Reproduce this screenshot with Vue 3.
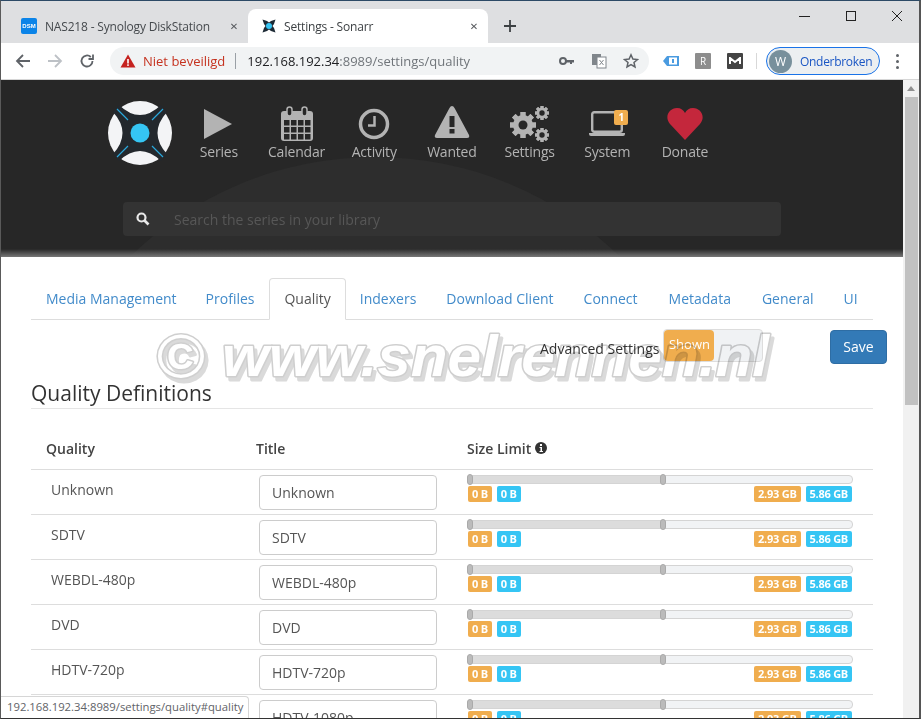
<script setup>
const navItems = [
  { label: 'Series', icon: 'play' },
  { label: 'Calendar', icon: 'calendar' },
  { label: 'Activity', icon: 'clock' },
  { label: 'Wanted', icon: 'warning' },
  { label: 'Settings', icon: 'cogs' },
  { label: 'System', icon: 'laptop' },
  { label: 'Donate', icon: 'heart' }
]

const tabs = ['Media Management', 'Profiles', 'Quality', 'Indexers', 'Download Client', 'Connect', 'Metadata', 'General', 'UI']

const qualities = ['Unknown', 'SDTV', 'WEBDL-480p', 'DVD', 'HDTV-720p', 'HDTV-1080p']

// gear teeth, so the three cogs don't need three long paths
const teeth = [0, 45, 90, 135, 180, 225, 270, 315]
const calendarCols = [8, 15, 22, 29]
const calendarRows = [14, 21, 28]
</script>

<template>
  <div class="window">
    <!-- browser chrome -->
    <div class="tabstrip">
      <div class="tab">
        <span class="dsm-icon">DSM</span>
        <span class="tab-title">NAS218 - Synology DiskStation</span>
        <span class="tab-close">✕</span>
      </div>
      <div class="tab active">
        <svg class="fav" viewBox="0 0 16 16" width="16" height="16">
          <path d="M1.500 1.500 L6 3 L8 4.500 L10 3 L14.500 1.500 L13 6 L11.500 8 L13 10 L14.500 14.500 L10 13 L8 11.500 L6 13 L1.500 14.500 L3 10 L4.500 8 L3 6 Z" fill="#1d2a35" />
          <circle cx="8" cy="8" r="3" fill="#35c5f4" />
        </svg>
        <span class="tab-title">Settings - Sonarr</span>
        <span class="tab-close">✕</span>
      </div>
      <svg class="newtab" viewBox="0 0 14 14" width="14" height="14">
        <path d="M7 1 V13 M1 7 H13" stroke="#3c4043" stroke-width="1.800" fill="none" />
      </svg>
      <div class="winbtns">
        <svg viewBox="0 0 12 12" width="12" height="12"><path d="M0 6.500 H11" stroke="#222" stroke-width="1" /></svg>
        <svg viewBox="0 0 12 12" width="12" height="12"><rect x="1.500" y="1.500" width="9" height="9" stroke="#222" fill="none" /></svg>
        <svg viewBox="0 0 12 12" width="12" height="12"><path d="M1 1 L11 11 M11 1 L1 11" stroke="#222" fill="none" /></svg>
      </div>
    </div>

    <div class="toolbar">
      <svg class="tool" viewBox="0 0 16 16" width="16" height="16"><path d="M15 8 H2 M8 2 L2 8 L8 14" stroke="#5f6368" stroke-width="1.800" fill="none" /></svg>
      <svg class="tool" viewBox="0 0 16 16" width="16" height="16"><path d="M1 8 H14 M8 2 L14 8 L8 14" stroke="#bdc1c6" stroke-width="1.800" fill="none" /></svg>
      <svg class="tool" viewBox="0 0 16 16" width="16" height="16"><path d="M13.500 8 A5.500 5.500 0 1 1 11.800 4 M14 1.500 V6 H9.500" stroke="#5f6368" stroke-width="1.800" fill="none" /></svg>
      <div class="omnibox">
        <svg viewBox="0 0 16 14" width="16" height="14"><path d="M8 0.500 L15.500 13.500 H0.500 Z" fill="#c5221f" /><rect x="7.200" y="5" width="1.600" height="4.500" fill="#fff" /><rect x="7.200" y="10.300" width="1.600" height="1.600" fill="#fff" /></svg>
        <span class="insecure">Niet beveiligd</span>
        <span class="omni-sep"></span>
        <span class="url">192.168.192.34<span class="url-rest">:8989/settings/quality</span></span>
        <span class="omni-icons">
          <svg viewBox="0 0 16 10" width="16" height="10"><circle cx="4" cy="5" r="3" stroke="#5f6368" stroke-width="2" fill="none" /><path d="M7 4 H15 V6.500 H13 V8 H11 V6.500 H7 Z" fill="#5f6368" /></svg>
          <svg viewBox="0 0 16 16" width="16" height="16"><rect x="1" y="1" width="9" height="11" fill="#80868b" /><rect x="6" y="4" width="9" height="11" fill="#fff" stroke="#80868b" /><path d="M8.500 7 L12.500 12 M12.500 7 L8.500 12" stroke="#80868b" /></svg>
          <svg viewBox="0 0 16 16" width="16" height="16"><path d="M8 1.800 L9.900 6 L14.500 6.500 L11 9.500 L12 14 L8 11.700 L4 14 L5 9.500 L1.500 6.500 L6.100 6 Z" stroke="#5f6368" stroke-width="1.500" fill="none" /></svg>
        </span>
      </div>
      <div class="exts">
        <svg viewBox="0 0 16 12" width="16" height="12"><path d="M0 6 L4 1 H16 V11 H4 Z" fill="#4a9be0" /><rect x="6" y="2.500" width="8" height="7" fill="#fff" /><rect x="9" y="4" width="2" height="4" fill="#4a9be0" /></svg>
        <span class="ext-r">R</span>
        <span class="ext-m">
          <svg viewBox="0 0 12 8" width="12" height="8"><path d="M1 7 V1 L6 5 L11 1 V7" stroke="#fff" stroke-width="2" fill="none" /></svg>
        </span>
      </div>
      <span class="ext-sep"></span>
      <div class="profile">
        <span class="avatar">W</span>
        <span>Onderbroken</span>
      </div>
      <span class="kebab"><i></i><i></i><i></i></span>
    </div>

    <div class="viewport">
      <div class="page">
        <!-- Sonarr header -->
        <header class="site-header">
          <div class="backdrop-circle"></div>
          <div class="nav-row">
            <svg class="logo" viewBox="0 0 64 64" width="64" height="64">
              <circle cx="32" cy="32" r="32" fill="#f3f4f6" />
              <path d="M5 11 L11 4 Q32 24 53 4 L59 11 Q40 32 59 53 L53 60 Q32 40 11 60 L5 53 Q24 32 5 11 Z" fill="#23282d" />
              <path d="M9 8 L20 19 M55 8 L44 19 M9 56 L20 45 M55 56 L44 45" stroke="#2aa8dc" stroke-width="1.200" />
              <circle cx="32" cy="32" r="9.500" fill="#35c5f4" />
            </svg>
            <div v-for="item in navItems" :key="item.label" class="nav-item">
              <div class="nav-icon">
                <svg v-if="item.icon === 'play'" viewBox="0 0 32 32" width="32" height="32">
                  <path d="M1 1 L29 16 L1 31 Z" fill="#b3b3b3" />
                </svg>
                <svg v-else-if="item.icon === 'calendar'" viewBox="0 0 34 36" width="34" height="36">
                  <rect x="1" y="5" width="32" height="30" rx="3" fill="#b3b3b3" />
                  <rect x="7" y="1" width="5" height="9" rx="2.500" fill="#272727" stroke="#b3b3b3" stroke-width="1.500" />
                  <rect x="22" y="1" width="5" height="9" rx="2.500" fill="#272727" stroke="#b3b3b3" stroke-width="1.500" />
                  <template v-for="col in calendarCols" :key="col">
                    <rect v-for="row in calendarRows" :key="row" :x="col - 4" :y="row" width="5.500" height="5.500" fill="#272727" />
                  </template>
                </svg>
                <svg v-else-if="item.icon === 'clock'" viewBox="0 0 32 32" width="32" height="32">
                  <circle cx="16" cy="16" r="13.500" stroke="#b3b3b3" stroke-width="3.500" fill="none" />
                  <path d="M16.500 8 V17.500 H10" stroke="#b3b3b3" stroke-width="2.500" fill="none" />
                </svg>
                <svg v-else-if="item.icon === 'warning'" class="warn-icon" viewBox="0 0 36 34" width="36" height="34">
                  <path d="M18 1 Q19.500 1 20.500 3 L35 30 Q36 33 33 33 H3 Q0 33 1 30 L15.500 3 Q16.500 1 18 1 Z" fill="#b3b3b3" />
                  <rect x="15.500" y="11" width="5" height="11" fill="#272727" />
                  <rect x="15.500" y="24" width="5" height="4.500" fill="#272727" />
                </svg>
                <svg v-else-if="item.icon === 'cogs'" viewBox="0 0 40 36" width="40" height="36">
                  <g transform="translate(13 19)">
                    <rect v-for="t in teeth" :key="t" x="-2.500" y="-13" width="5" height="26" fill="#b3b3b3" :transform="`rotate(${t})`" />
                    <circle r="10" fill="#b3b3b3" />
                    <circle r="4.500" fill="#272727" />
                  </g>
                  <g transform="translate(32 7)">
                    <rect v-for="t in teeth" :key="t" x="-1.500" y="-7" width="3" height="14" fill="#b3b3b3" :transform="`rotate(${t})`" />
                    <circle r="5.500" fill="#b3b3b3" />
                    <circle r="2.700" fill="#272727" />
                  </g>
                  <g transform="translate(32 29)">
                    <rect v-for="t in teeth" :key="t" x="-1.500" y="-7" width="3" height="14" fill="#b3b3b3" :transform="`rotate(${t})`" />
                    <circle r="5.500" fill="#b3b3b3" />
                    <circle r="2.700" fill="#272727" />
                  </g>
                </svg>
                <span v-else-if="item.icon === 'laptop'" class="laptop">
                  <svg viewBox="0 0 38 26" width="38" height="26">
                    <rect x="4.200" y="1.200" width="29.600" height="19.600" rx="2" stroke="#b3b3b3" stroke-width="2.400" fill="none" />
                    <path d="M1 22 H37 V23 Q37 25 35 25 H3 Q1 25 1 23 Z" fill="#b3b3b3" />
                  </svg>
                  <span class="laptop-badge">1</span>
                </span>
                <svg v-else viewBox="0 0 36 32" width="36" height="32">
                  <path d="M18 32 L3 16 C-3 9 2 0 10 0 C14 0 16.500 2 18 5 C19.500 2 22 0 26 0 C34 0 39 9 33 16 Z" fill="#c4273c" />
                </svg>
              </div>
              <span class="nav-label">{{ item.label }}</span>
            </div>
          </div>

          <div class="search">
            <svg viewBox="0 0 14 14" width="14" height="14">
              <circle cx="5.500" cy="5.500" r="4" stroke="#e8e8e8" stroke-width="2.200" fill="none" />
              <path d="M8.500 8.500 L12.500 12.500" stroke="#e8e8e8" stroke-width="2.600" />
            </svg>
            <span class="search-text">Search the series in your library</span>
          </div>
          <div class="header-fade"></div>
        </header>

        <!-- settings panel -->
        <main class="panel">
          <nav class="tabs">
            <a v-for="tab in tabs" :key="tab" :class="['tab-link', { current: tab === 'Quality' }]">{{ tab }}</a>
          </nav>

          <div class="actions">
            <span class="adv-label">Advanced Settings</span>
            <div class="switch">
              <span class="switch-on">Shown</span>
            </div>
            <button class="save">Save</button>
          </div>

          <h3 class="legend">Quality Definitions</h3>

          <div class="thead">
            <span class="col-quality">Quality</span>
            <span class="col-title">Title</span>
            <span class="col-size">Size Limit
              <svg class="info" viewBox="0 0 12 12" width="12" height="12">
                <circle cx="6" cy="6" r="6" fill="#333" />
                <rect x="5" y="2" width="2" height="2" fill="#fff" />
                <path d="M4.500 5 H7 V9 H8 V10 H4.500 V9 H5.500 V6 H4.500 Z" fill="#fff" />
              </svg>
            </span>
          </div>

          <div v-for="q in qualities" :key="q" class="row">
            <div class="cell-quality">{{ q }}</div>
            <div class="cell-title">
              <div class="input">{{ q }}</div>
            </div>
            <div class="cell-size">
              <div class="slider">
                <span class="slider-fill"></span>
                <span class="handle"></span>
                <span class="handle mid"></span>
              </div>
              <div class="limits">
                <span class="pill orange">0 B</span>
                <span class="pill blue">0 B</span>
                <span class="spacer"></span>
                <span class="pill orange">2.93 GB</span>
                <span class="pill blue">5.86 GB</span>
              </div>
            </div>
          </div>
        </main>
      </div>

      <div class="scrollbar">
        <svg viewBox="0 0 8 5" width="8" height="5"><path d="M4 0 L8 5 H0 Z" fill="#909090" /></svg>
        <div class="thumb"></div>
      </div>

      <!-- these two really do lie over the page -->
      <svg class="watermark" viewBox="0 0 640 70" width="640" height="70">
        <text class="wm-text" x="4" y="56" font-size="62" textLength="48" lengthAdjust="spacingAndGlyphs">©</text>
        <text class="wm-text" x="70" y="54" font-size="58" textLength="547" lengthAdjust="spacingAndGlyphs">www.snelrennen.nl</text>
      </svg>
      <div class="status">192.168.192.34:8989/settings/quality#quality</div>
    </div>
  </div>
</template>

<style>
html, body {
  margin: 0;
  height: 719px;
  overflow: hidden;
  background: #fff;
}
</style>

<style scoped>
.window {
  width: 921px;
  height: 719px;
  box-sizing: border-box;
  display: flex;
  flex-direction: column;
  border-top: 1px solid #2c4a66;
  border-left: 1px solid #5a5a5a;
  border-right: 2px solid #555;
  border-bottom: 1px solid #333;
  font-family: "Open Sans", "Noto Sans", sans-serif;
  color: #333;
  overflow: hidden;
}

.tabstrip {
  height: 42px;
  flex: none;
  background: #dedfe1;
  display: flex;
  align-items: flex-end;
  position: relative;
  padding-left: 7px;
}

.tab {
  width: 240px;
  height: 34px;
  box-sizing: border-box;
  display: flex;
  align-items: center;
  padding: 0 10px 0 13px;
  font-size: 12px;
  letter-spacing: -0.18px;
  color: #45494d;
}

.tab.active {
  background: #fff;
  border-radius: 8px 8px 0 0;
  color: #3c4043;
}

.tab-title {
  flex: 1;
  margin-left: 8px;
  white-space: nowrap;
}

.tab.active .tab-title {
  margin-left: 7px;
}

.tab-close {
  font-size: 10px;
  font-family: "DejaVu Sans", sans-serif;
  color: #55585c;
}

.dsm-icon {
  width: 16px;
  height: 16px;
  background: #0b84e8;
  border-radius: 2px;
  color: #fff;
  font: bold 6px/16px "Liberation Sans", sans-serif;
  letter-spacing: 0;
  text-align: center;
}

.newtab {
  margin: 0 0 10px 15px;
}

.winbtns {
  position: absolute;
  top: 9px;
  right: 16px;
  display: flex;
  gap: 34px;
}

.toolbar {
  height: 37px;
  flex: none;
  box-sizing: border-box;
  background: #fff;
  border-bottom: 1px solid #d6d6d6;
  display: flex;
  align-items: center;
  padding-left: 14px;
}

.tool {
  margin-right: 16px;
}

.omnibox {
  width: 539px;
  height: 28px;
  box-sizing: border-box;
  margin-left: -1px;
  background: #f1f3f4;
  border-radius: 14px;
  display: flex;
  align-items: center;
  padding: 0 10px;
  font-size: 13px;
  white-space: nowrap;
}

.insecure {
  color: #c5321f;
  margin-left: 7px;
}

.omni-sep {
  width: 1px;
  height: 16px;
  background: #9aa0a6;
  margin: 0 11px 0 10px;
}

.url {
  color: #202124;
}

.url-rest {
  color: #70757a;
}

.omni-icons {
  margin-left: auto;
  display: flex;
  align-items: center;
  gap: 16px;
}

.exts {
  display: flex;
  align-items: center;
  gap: 16px;
  margin-left: 14px;
}

.ext-r, .ext-m {
  width: 16px;
  height: 16px;
  display: flex;
  align-items: center;
  justify-content: center;
  border-radius: 1px;
  color: #fff;
  font-size: 10px;
}

.ext-r {
  background: #8d8d8d;
}

.ext-m {
  background: #444;
}

.ext-sep {
  width: 1px;
  height: 16px;
  background: #d8d8d8;
  margin: 0 9px 0 13px;
}

.profile {
  width: 114px;
  height: 28px;
  box-sizing: border-box;
  border: 1px solid #1a73e8;
  border-radius: 14px;
  background: #eceff1;
  display: flex;
  align-items: center;
  gap: 8px;
  padding-left: 2px;
  color: #1a56c4;
  font-size: 12px;
  letter-spacing: -0.3px;
}

.avatar {
  width: 23px;
  height: 23px;
  border-radius: 50%;
  background: #78909c;
  color: #fff;
  text-align: center;
  line-height: 23px;
}

.kebab {
  display: flex;
  flex-direction: column;
  gap: 3px;
  margin-left: 16px;
}

.kebab i {
  width: 3px;
  height: 3px;
  border-radius: 50%;
  background: #5f6368;
}

.viewport {
  flex: 1;
  min-height: 0;
  display: flex;
  position: relative;
}

.page {
  flex: 1;
  min-width: 0;
  overflow: hidden;
}

.site-header {
  height: 177px;
  box-sizing: border-box;
  background: #272727;
  position: relative;
  overflow: hidden;
  padding-top: 21px;
}

.backdrop-circle {
  position: absolute;
  left: 23px;
  top: 77px;
  width: 702px;
  height: 702px;
  border-radius: 50%;
  background: #2d2d2d;
}

.nav-row {
  display: flex;
  align-items: flex-start;
  padding-left: 107px;
  position: relative;
}

.logo {
  margin-right: 8px;
}

.nav-item {
  width: 77.700px;
  display: flex;
  flex-direction: column;
  align-items: center;
}

.nav-icon {
  height: 40px;
  display: flex;
  align-items: center;
  justify-content: center;
  margin-top: 3px;
}

.warn-icon {
  margin-top: -4px;
}

.nav-label {
  font-size: 14px;
  line-height: 20px;
  letter-spacing: -0.2px;
  color: #b3b3b3;
  margin-top: -2px;
}

.laptop {
  position: relative;
  display: block;
  height: 26px;
}

.laptop-badge {
  position: absolute;
  top: -1px;
  right: -2px;
  width: 14px;
  height: 15px;
  background: #f0ad4e;
  border-radius: 2px;
  color: #fff;
  font-size: 10px;
  font-weight: 700;
  line-height: 15px;
  text-align: center;
}

.search {
  position: relative;
  width: 658px;
  height: 34px;
  box-sizing: border-box;
  margin: 37px 0 0 122px;
  background: #333;
  border-radius: 4px;
  display: flex;
  align-items: center;
  padding-left: 13px;
}

.search-text {
  margin-left: 24px;
  font-size: 14px;
  color: #575757;
}

.header-fade {
  position: absolute;
  left: 0;
  right: 0;
  bottom: 0;
  height: 8px;
  background: linear-gradient(#27272700, #777);
}

.panel {
  background: #fff;
  border-radius: 6px 6px 0 0;
  position: relative;
  padding: 21px 30px 0 30px;
}

.tabs {
  display: flex;
  height: 42px;
  box-sizing: border-box;
  border-bottom: 1px solid #ddd;
  font-size: 14px;
  white-space: nowrap;
}

.tab-link {
  height: 42px;
  box-sizing: border-box;
  padding: 0 15px;
  line-height: 41px;
  color: #428bca;
}

.tab-link:first-child {
  margin-right: -1px;
}

.tab-link:nth-child(7),
.tab-link:nth-child(8) {
  margin-left: 1px;
}

.tab-link.current {
  color: #555;
  background: #fff;
  border: 1px solid #ddd;
  border-bottom-color: #fff;
  border-radius: 4px 4px 0 0;
  padding: 0 14px;
  margin-right: -1px;
  line-height: 39px;
}

.actions {
  display: flex;
  align-items: flex-start;
  height: 59px;
  padding-top: 9px;
  box-sizing: border-box;
  width: 856px;
  font-size: 14px;
}

.adv-label {
  margin: 10px 4px 0 509px;
}

.switch {
  width: 100px;
  height: 33px;
  box-sizing: border-box;
  border: 1px solid #ddd;
  border-radius: 4px;
  background: #f0f2f4;
}

.switch-on {
  display: block;
  width: 50px;
  height: 31px;
  background: #f0ad4e;
  border-radius: 4px;
  color: #fff;
  font-size: 13px;
  line-height: 28px;
  text-align: center;
}

.save {
  width: 57px;
  height: 34px;
  margin-left: auto;
  margin-top: 1px;
  padding: 0 0 2px;
  background: #337ab7;
  border: 1px solid #2e6da4;
  border-radius: 4px;
  color: #fff;
  font: 14px "Open Sans", sans-serif;
}

.legend {
  width: 842px;
  margin: 0;
  height: 29px;
  border-bottom: 1px solid #e5e5e5;
  font-size: 21px;
  font-weight: 400;
  line-height: 28px;
  color: #333;
}

.thead {
  width: 842px;
  height: 60px;
  box-sizing: border-box;
  display: flex;
  align-items: center;
  font-size: 14px;
  font-weight: 600;
  color: #444;
  padding-top: 18px;
}

.col-quality {
  width: 225px;
  box-sizing: border-box;
  padding-left: 15px;
}

.col-title {
  width: 211px;
}

.col-size {
  display: flex;
  align-items: center;
  gap: 4px;
}

.row {
  width: 842px;
  height: 45px;
  box-sizing: border-box;
  border-top: 1px solid #ddd;
  display: flex;
  font-size: 14px;
  color: #555;
}

.cell-quality {
  width: 228px;
  padding: 10px 0 0 20px;
  box-sizing: border-box;
  line-height: 20px;
}

.cell-title {
  width: 208px;
  padding-top: 5px;
}

.input {
  width: 178px;
  height: 35px;
  box-sizing: border-box;
  border: 1px solid #ccc;
  border-radius: 4px;
  padding-left: 12px;
  line-height: 33px;
  color: #555;
  background: #fff;
}

.cell-size {
  width: 386px;
  padding-top: 5px;
}

.slider {
  position: relative;
  height: 9px;
  box-sizing: border-box;
  border: 1px solid #d4d4d4;
  border-radius: 4px;
  background: #f1f3f5;
}

.slider-fill {
  position: absolute;
  left: 0;
  top: 0;
  bottom: 0;
  width: 195px;
  background: #dcdcdc;
  border-radius: 4px 0 0 4px;
}

.handle {
  position: absolute;
  left: -1px;
  top: -2px;
  width: 6px;
  height: 11px;
  background: #bbb;
  border: 1px solid #aaa;
  box-sizing: border-box;
  border-radius: 3px;
}

.handle.mid {
  left: 192px;
}

.limits {
  display: flex;
  gap: 5px;
  margin-top: 2px;
  padding: 0 1px;
}

.spacer {
  flex: 1;
}

.pill {
  height: 16px;
  padding: 0 4px;
  border-radius: 2px;
  color: #fff;
  font-size: 11px;
  font-weight: 700;
  letter-spacing: -0.25px;
  line-height: 16px;
}

.pill.orange {
  background: #f0ad4e;
}

.pill.blue {
  background: #35c5f4;
}

.scrollbar {
  width: 16px;
  flex: none;
  background: #f1f1f1;
  display: flex;
  flex-direction: column;
  align-items: center;
  padding-top: 6px;
  box-sizing: border-box;
}

.thumb {
  width: 13px;
  height: 308px;
  margin-top: 6px;
  background: #c1c1c1;
}

/* multiply: the white fill leaves the text underneath readable, like the real stamp */
.watermark {
  position: absolute;
  left: 151px;
  top: 242px;
  overflow: visible;
  pointer-events: none;
  mix-blend-mode: multiply;
  filter: drop-shadow(3px 4px 0 #dadada);
}

.wm-text {
  font-family: "Liberation Sans", sans-serif;
  font-style: italic;
  font-weight: 700;
  fill: #fff;
  stroke: #cfcfcf;
  stroke-width: 3px;
  stroke-linejoin: round;
  paint-order: stroke;
}

.status {
  position: absolute;
  left: 0;
  bottom: 0;
  height: 22px;
  box-sizing: border-box;
  padding: 0 5px 0 6px;
  background: #fff;
  border: 1px solid #d6d6d6;
  border-left: none;
  border-bottom: none;
  border-radius: 0 4px 0 0;
  font-size: 11.300px;
  line-height: 20px;
  color: #5f6368;
  white-space: nowrap;
}
</style>
